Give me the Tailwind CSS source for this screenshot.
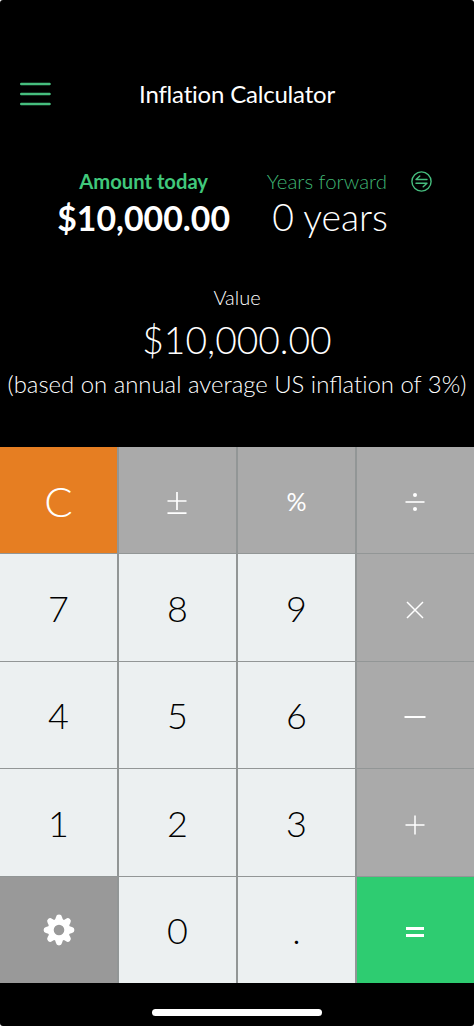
<!DOCTYPE html>
<html lang="en">
<head>
<meta charset="utf-8">
<meta name="viewport" content="width=device-width, initial-scale=1">
<title>Inflation Calculator</title>
<script src="https://cdn.jsdelivr.net/npm/@tailwindcss/browser@4"></script>
</head>
<body class="bg-white font-['Lato',sans-serif] text-white">
<main class="flex h-[1026px] w-[474px] flex-col overflow-hidden rounded-[3px] bg-black">
  <header class="grid h-[130px] grid-cols-[72px_330px_72px] items-center pt-[57px]">
    <button class="pl-5" aria-label="Menu">
      <svg width="31" height="24" viewBox="0 0 31 24" fill="none" stroke="#46bd7e" stroke-width="2.4" stroke-linecap="round"><path d="M1.2 2h28.4M1.2 12h28.4M1.2 22h28.4"/></svg>
    </button>
    <h1 class="pt-px text-center text-[24px] leading-8 font-normal tracking-[-0.2px] whitespace-nowrap [font-variant-ligatures:common-ligatures]">Inflat&zwnj;ion Calculator</h1>
  </header>

  <section class="flex h-[130px] pt-[37px]">
    <div class="w-[230px] text-right">
      <div class="pr-[22px] text-[20.2px] leading-7 font-bold text-[#40c87b]">Amount today</div>
      <div class="pt-px text-[33.8px] leading-[44px] font-bold">$10,000.00</div>
    </div>
    <div class="w-[158px] text-right">
      <div class="pr-px text-[20.4px] leading-7 font-light text-[#3fb574]">Years forward</div>
      <div class="text-[37.4px] leading-[43px] font-light">0 years</div>
    </div>
    <div class="pt-1 pl-[23px]">
      <svg width="21" height="21" viewBox="0 0 21 21" fill="none" stroke="#46bd7e" stroke-width="1.4" stroke-linecap="round" stroke-linejoin="round"><circle cx="10.5" cy="10.5" r="9.6"/><path d="M16 8.5H5l3.8-3.6M5 12.2h11l-3.8 3.6"/></svg>
    </div>
  </section>

  <section class="flex h-[187px] flex-col items-center pt-[23px] font-light whitespace-nowrap">
    <div class="text-[20px] leading-7">Value</div>
    <div class="pt-px text-[37.2px] leading-[56px]">$10,000.00</div>
    <div class="text-[23.9px] leading-8">(based on annual average US inflat&zwnj;ion of 3%)</div>
  </section>

  <section class="grid h-[536px] grid-cols-[117px_117px_117px_117px] grid-rows-[106px_107px_106px_107px_106px] gap-x-[2px] gap-y-px bg-[#929696] text-[36px] leading-none font-light text-black *:flex *:items-center *:justify-center">
    <button class="bg-[#e67e22] pt-px text-[42px] text-white">C</button>
    <button class="bg-[#aaaaaa] pr-px text-white"><svg class="mt-1.5" width="20" height="24" viewBox="0 0 20 24" fill="none" stroke="#fff" stroke-width="1.7"><path d="M.5 10h19M10 1v18M.5 22.2h19"/></svg></button>
    <button class="bg-[#aaaaaa] pt-0.5 text-[25px] font-normal text-white">%</button>
    <button class="bg-[#aaaaaa] pr-0.5"><svg class="mt-1" width="20" height="20" viewBox="0 0 20 20" fill="#fff"><path d="M.5 9.2h19v1.6H.5z"/><circle cx="10" cy="2.9" r="2"/><circle cx="10" cy="17.1" r="2"/></svg></button>
    <button class="bg-[#ecf0f1]">7</button>
    <button class="bg-[#ecf0f1]">8</button>
    <button class="bg-[#ecf0f1]">9</button>
    <button class="bg-[#aaaaaa] pr-0.5"><svg class="mt-1" width="18" height="18" viewBox="0 0 18 18" stroke="#fff" stroke-width="1.5"><path d="M1 1l16 16M17 1L1 17"/></svg></button>
    <button class="bg-[#ecf0f1]">4</button>
    <button class="bg-[#ecf0f1]">5</button>
    <button class="bg-[#ecf0f1]">6</button>
    <button class="bg-[#aaaaaa] pr-0.5"><svg class="mt-1" width="22" height="4" viewBox="0 0 22 4" fill="#fff"><path d="M.5 1h21v2H.5z"/></svg></button>
    <button class="bg-[#ecf0f1]">1</button>
    <button class="bg-[#ecf0f1]">2</button>
    <button class="bg-[#ecf0f1]">3</button>
    <button class="bg-[#aaaaaa] pr-0.5"><svg class="mt-1" width="20" height="20" viewBox="0 0 20 20" stroke="#fff" stroke-width="1.5"><path d="M.5 10h19M10 .5v19"/></svg></button>
    <button class="bg-[#999999]" aria-label="Settings">
      <svg width="32" height="32" viewBox="-16 -16 32 32">
        <g fill="#fff">
          <path id="t" d="M-5.5 -9Q-3.4 -10.2 -3 -13Q-2.6 -15.4 0 -15.4Q2.6 -15.4 3 -13Q3.4 -10.2 5.5 -9z"/>
          <use href="#t" transform="rotate(45)"/><use href="#t" transform="rotate(90)"/><use href="#t" transform="rotate(135)"/><use href="#t" transform="rotate(180)"/><use href="#t" transform="rotate(225)"/><use href="#t" transform="rotate(270)"/><use href="#t" transform="rotate(315)"/>
        </g>
        <circle r="8" fill="none" stroke="#fff" stroke-width="5.4"/>
      </svg>
    </button>
    <button class="bg-[#ecf0f1]">0</button>
    <button class="bg-[#ecf0f1]">.</button>
    <button class="bg-[#2ecc71] pr-0.5"><svg class="mt-1" width="18" height="10" viewBox="0 0 18 10" fill="#fff"><path d="M0 0h18v3H0zM0 7h18v3H0z"/></svg></button>
  </section>

  <footer class="flex h-[43px] justify-center pt-[26px]">
    <div class="h-[7px] w-[170px] rounded-full bg-white"></div>
  </footer>
</main>
</body>
</html>
